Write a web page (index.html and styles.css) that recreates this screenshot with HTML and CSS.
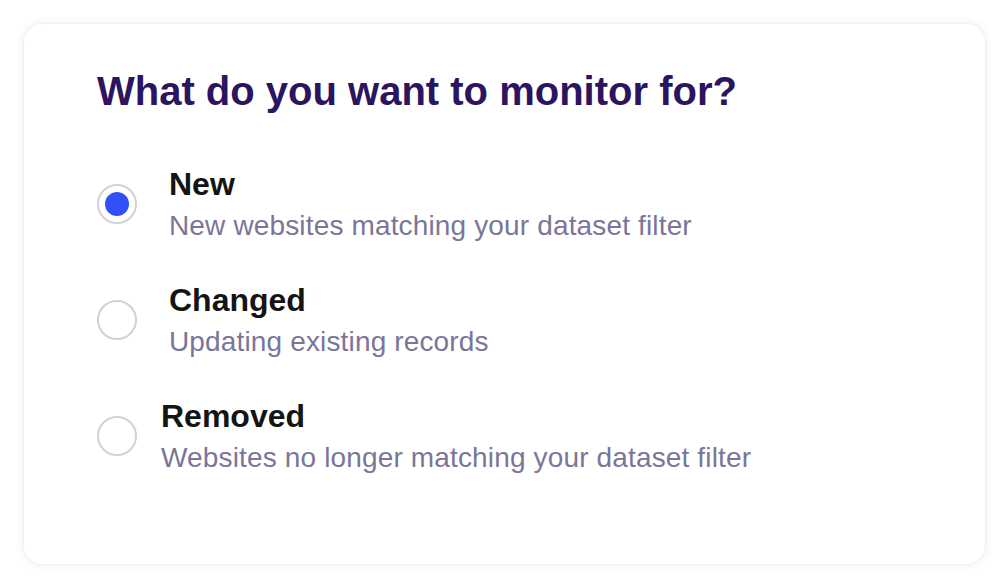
FILE: index.html
```html
<!DOCTYPE html>
<html lang="en">
<head>
<title>Monitor settings</title>
<meta charset="utf-8">
<link rel="stylesheet" href="styles.css">
</head>
    <body>
        <div class="card">
            <h1 class="title">What do you want to monitor for?</h1>
            <div class="options">
                <label class="option">
                    <span class="radio checked"><span class="dot"></span></span>
                    <span class="text">
                        <span class="name">New</span>
                        <span class="desc">New websites matching your dataset filter</span>
                    </span>
                </label>
                <label class="option">
                    <span class="radio"></span>
                    <span class="text">
                        <span class="name">Changed</span>
                        <span class="desc">Updating existing records</span>
                    </span>
                </label>
                <label class="option narrow">
                    <span class="radio"></span>
                    <span class="text">
                        <span class="name">Removed</span>
                        <span class="desc">Websites no longer matching your dataset filter</span>
                    </span>
                </label>
            </div>
        </div>
    </body>
</html>
```
FILE: styles.css
```css
@charset "utf-8";

* {
    margin: 0;
    box-sizing: border-box;
}

html {
    height: 100%;
}

body {
    background: #ffffff;
    font-family: "Liberation Sans", Arial, sans-serif;
    height: 100%;
    padding: 24px;
}

.card {
    width: 961px;
    height: 540px;
    background: #ffffff;
    border-radius: 18px;
    box-shadow: 0 0 0 1px #f1f1f1, 0 0 6px 3px rgba(0, 0, 0, 0.045);
    padding: 43px 73px;
}

.title {
    font-size: 40px;
    font-weight: bold;
    color: #2b1460;
    line-height: 48px;
}

.options {
    margin-top: 49px;
    display: flex;
    flex-direction: column;
    gap: 32px;
}

.option {
    display: flex;
    align-items: flex-start;
    gap: 32px;
}

.option.narrow {
    gap: 24px;
}

.radio {
    flex: none;
    width: 40px;
    height: 40px;
    margin-top: 20px;
    border: 2px solid #d2d1d9;
    border-radius: 50%;
    display: flex;
    align-items: center;
    justify-content: center;
}

.dot {
    width: 24px;
    height: 24px;
    border-radius: 50%;
    background: #3350f6;
}

.text {
    display: flex;
    flex-direction: column;
}

.name {
    font-size: 32px;
    font-weight: bold;
    color: #141414;
    line-height: 40px;
}

.desc {
    font-size: 28px;
    color: #7b7698;
    line-height: 44px;
    letter-spacing: 0.15px;
}
```
